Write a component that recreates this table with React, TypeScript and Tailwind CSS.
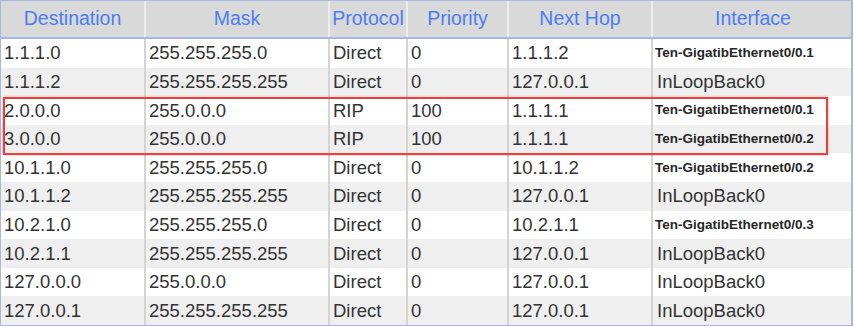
const rows = [
  ["1.1.1.0", "255.255.255.0", "Direct", "0", "1.1.1.2", "Ten-GigatibEthernet0/0.1"],
  ["1.1.1.2", "255.255.255.255", "Direct", "0", "127.0.0.1", "InLoopBack0"],
  ["2.0.0.0", "255.0.0.0", "RIP", "100", "1.1.1.1", "Ten-GigatibEthernet0/0.1"],
  ["3.0.0.0", "255.0.0.0", "RIP", "100", "1.1.1.1", "Ten-GigatibEthernet0/0.2"],
  ["10.1.1.0", "255.255.255.0", "Direct", "0", "10.1.1.2", "Ten-GigatibEthernet0/0.2"],
  ["10.1.1.2", "255.255.255.255", "Direct", "0", "127.0.0.1", "InLoopBack0"],
  ["10.2.1.0", "255.255.255.0", "Direct", "0", "10.2.1.1", "Ten-GigatibEthernet0/0.3"],
  ["10.2.1.1", "255.255.255.255", "Direct", "0", "127.0.0.1", "InLoopBack0"],
  ["127.0.0.0", "255.0.0.0", "Direct", "0", "127.0.0.1", "InLoopBack0"],
  ["127.0.0.1", "255.255.255.255", "Direct", "0", "127.0.0.1", "InLoopBack0"],
];

const headers = ["Destination", "Mask", "Protocol", "Priority", "Next Hop", "Interface"];

const cols = "grid grid-cols-[145px_184px_78px_101px_144px_200px]";

export default function App() {
  return (
    <div className="w-[854px] h-[326px] bg-white font-['Liberation_Sans',Arial,sans-serif] overflow-hidden">
      <div className="relative w-[853px] border-l border-r-2 border-t border-b-2 border-[#a9b5e6]">
        {/* header */}
        <div className={`${cols} h-[38px] bg-[#d9d9d9] border-b-2 border-[#a9b5e6]`}>
          {headers.map((h, i) => (
            <div
              key={h}
              className={`flex items-center justify-center text-[19.5px] text-[#4b7ef2] ${i < 5 ? "border-r-2 border-[#ececec]" : ""}`}
            >
              {h}
            </div>
          ))}
        </div>
        {/* body */}
        {rows.map((r, ri) => (
          <div key={ri} className={`${cols} h-[28.6px] ${ri % 2 ? "bg-[#efefef]" : "bg-white"}`}>
            {r.map((c, ci) => {
              const small = c.startsWith("Ten-");
              return (
                <div
                  key={ci}
                  className={`flex items-center overflow-hidden whitespace-nowrap ${ci < 5 ? "border-r-2 border-[#d4d4d4]" : ""} ${
                    small
                      ? "pl-[2px] text-[13.5px] font-bold text-[#262626]"
                      : ci === 5
                      ? "pl-[4px] text-[18.5px] text-[#333]"
                      : "pl-[3px] text-[18.5px] text-[#333]"
                  }`}
                >
                  {c}
                </div>
              );
            })}
          </div>
        ))}
        {/* red highlight */}
        <div className="absolute left-[2px] top-[96px] w-[825px] h-[58px] border-2 border-[#e8403c] shadow-[0_0_2px_rgba(232,64,60,0.6)] pointer-events-none" />
      </div>
    </div>
  );
}
